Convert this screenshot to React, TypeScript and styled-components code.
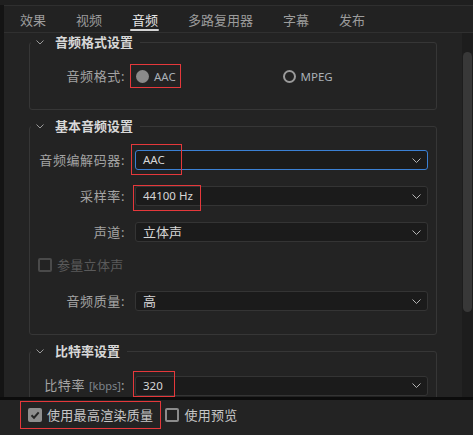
import React from 'react';
import styled, { createGlobalStyle } from 'styled-components';

const GlobalStyle = createGlobalStyle`
  html, body { margin: 0; padding: 0; background: #232323; }
  body { font-family: "Noto Sans", "Noto Sans CJK SC", sans-serif; }
  * { box-sizing: border-box; }
`;

const Root = styled.div`
  position: relative;
  width: 473px;
  height: 435px;
  display: flex;
  flex-direction: column;
  background: #232323;
  overflow: hidden;
  font-family: "Noto Sans", "Noto Sans CJK SC", sans-serif;
`;

const TopStrip = styled.div`
  flex: none;
  height: 5px;
  background: #1f1f1f;
`;

const Upper = styled.div`
  flex: none;
  height: 392px;
  display: flex;
`;

const LeftStrip = styled.div`
  flex: none;
  width: 4px;
  background: #141414;
`;

const Panel = styled.div`
  flex: 1;
  min-width: 0;
  display: flex;
  flex-direction: column;
  border-top: 1px solid #2f2f2f;
  background: #232323;
`;

const TabBar = styled.div`
  flex: none;
  height: 27px;
  display: flex;
  gap: 30px;
  padding-left: 16px;
  border-bottom: 1px solid #303030;
  background: #222222;
`;

const Tab = styled.div<{ $active?: boolean }>`
  position: relative;
  display: flex;
  align-items: center;
  font-size: 13px;
  color: ${p => (p.$active ? '#e6e6e6' : '#9c9c9c')};
  white-space: nowrap;
  &::after {
    content: '';
    display: ${p => (p.$active ? 'block' : 'none')};
    position: absolute;
    left: -2px;
    right: -1px;
    bottom: 1px;
    height: 2px;
    background: #d4d4d4;
    border-radius: 1px;
  }
`;

const Body = styled.div`
  flex: 1;
  min-height: 0;
  display: flex;
`;

const Content = styled.div`
  flex: 1;
  min-width: 0;
  overflow: hidden;
  padding-top: 1px;
`;

const ScrollTrack = styled.div`
  flex: none;
  width: 11px;
  background: #1d1d1d;
  padding: 19px 1px 0 1px;
`;

const ScrollThumb = styled.div`
  width: 9px;
  height: 260px;
  border-radius: 5px;
  background: #383838;
`;

const Group = styled.fieldset`
  margin: 0 25px 8px;
  padding: 16px 8px 23px 0;
  border: 1px solid #363636;
  border-radius: 3px;
  min-width: 0;
`;

const Legend = styled.legend`
  margin-left: 1px;
  padding: 0 7px 0 5px;
  height: 16px;
  display: flex;
  align-items: center;
  gap: 11px;
  font-size: 13px;
  line-height: 16px;
  font-weight: 700;
  color: #d8d8d8;
`;

const Rows = styled.div`
  display: flex;
  flex-direction: column;
  gap: 16px;
`;

const FormRow = styled.div`
  display: grid;
  grid-template-columns: 95px 1fr;
  column-gap: 10px;
  align-items: center;
  height: 20px;
`;

const Label = styled.div`
  text-align: right;
  font-size: 13px;
  line-height: 20px;
  letter-spacing: 0.6px;
  color: #a4a4a4;
  white-space: nowrap;
`;

const Unit = styled.span`
  font-size: 11px;
  letter-spacing: 0;
  color: #7f858c;
`;

const Select = styled.div<{ $focused?: boolean }>`
  height: 20px;
  display: flex;
  align-items: center;
  justify-content: space-between;
  padding: 0 6px 0 7px;
  background: #1b1b1b;
  border: 1px solid ${p => (p.$focused ? '#3b80d4' : '#343434')};
  border-radius: 3px;
`;

const Value = styled.span<{ $latin?: boolean }>`
  font-size: ${p => (p.$latin ? '11.5px' : '13px')};
  color: #d6d6d6;
  line-height: 18px;
`;

const RadioGroup = styled.div`
  display: grid;
  grid-template-columns: 1fr 1fr;
  align-items: center;
`;

const RadioItem = styled.div`
  display: flex;
  align-items: center;
  gap: 5px;
  padding-left: 1px;
`;

const RadioDot = styled.span<{ $checked?: boolean }>`
  width: 13px;
  height: 13px;
  border-radius: 50%;
  background: ${p => (p.$checked ? '#8a8a8a' : 'transparent')};
  border: ${p => (p.$checked ? 'none' : '2px solid #9a9a9a')};
`;

const RadioText = styled.span`
  font-size: 11.5px;
  color: #a9b0b6;
`;

const CheckRow = styled.div`
  display: flex;
  align-items: flex-start;
  gap: 5px;
  height: 17px;
  padding-left: 8px;
`;

const Box = styled.span<{ $checked?: boolean; $disabled?: boolean }>`
  flex: none;
  width: 14px;
  height: 14px;
  border-radius: 2px;
  display: flex;
  align-items: center;
  justify-content: center;
  background: ${p => (p.$checked ? '#8e8e8e' : 'transparent')};
  border: ${p => (p.$checked ? 'none' : `2px solid ${p.$disabled ? '#4a4a4a' : '#8c8c8c'}`)};
`;

const CheckText = styled.span<{ $disabled?: boolean }>`
  font-size: 13px;
  line-height: 14px;
  letter-spacing: 0.3px;
  color: ${p => (p.$disabled ? '#5a5a5a' : '#c6c6c6')};
  white-space: nowrap;
`;

const Separator = styled.div`
  flex: none;
  height: 3px;
  background: #0c0c0c;
`;

const Footer = styled.div`
  flex: 1;
  display: flex;
  align-items: flex-start;
  padding: 8px 0 0 28px;
  gap: 12px;
  background: #232323;
`;

const FooterItem = styled.div`
  display: flex;
  align-items: center;
  gap: 5px;
`;

const Highlight = styled.div`
  position: absolute;
  border: 1px solid #e5383b;
  pointer-events: none;
`;

const Chevron = ({ color = '#b4b4b4' }: { color?: string }) => (
  <svg width="9" height="5" viewBox="0 0 9 5" fill="none">
    <polyline points="0.5,0.5 4.5,4.5 8.5,0.5" stroke={color} strokeWidth="1" />
  </svg>
);

const LegendChevron = () => (
  <svg width="8" height="5" viewBox="0 0 8 5" fill="none">
    <polyline points="0.5,0.5 4,4 7.5,0.5" stroke="#9a9a9a" strokeWidth="1" />
  </svg>
);

const CheckMark = () => (
  <svg width="10" height="10" viewBox="0 0 10 10" fill="none">
    <polyline points="1.5,5.2 4,7.7 8.7,2.3" stroke="#262626" strokeWidth="2" />
  </svg>
);

const SelectRow = ({ label, value, latin, focused }: { label: React.ReactNode; value: string; latin?: boolean; focused?: boolean }) => (
  <FormRow>
    <Label>{label}</Label>
    <Select $focused={focused}>
      <Value $latin={latin}>{value}</Value>
      <Chevron />
    </Select>
  </FormRow>
);

const tabs = ['效果', '视频', '音频', '多路复用器', '字幕', '发布'];

export default function App() {
  return (
    <Root>
      <GlobalStyle />
      <TopStrip />
      <Upper>
        <LeftStrip />
        <Panel>
          <TabBar>
            {tabs.map(t => (
              <Tab key={t} $active={t === '音频'}>{t}</Tab>
            ))}
          </TabBar>
          <Body>
            <Content>
              <Group>
                <Legend><LegendChevron />音频格式设置</Legend>
                <FormRow>
                  <Label>音频格式:</Label>
                  <RadioGroup>
                    <RadioItem><RadioDot $checked /><RadioText>AAC</RadioText></RadioItem>
                    <RadioItem><RadioDot /><RadioText>MPEG</RadioText></RadioItem>
                  </RadioGroup>
                </FormRow>
              </Group>
              <Group>
                <Legend><LegendChevron />基本音频设置</Legend>
                <Rows>
                  <SelectRow label="音频编解码器:" value="AAC" latin focused />
                  <SelectRow label="采样率:" value="44100 Hz" latin />
                  <SelectRow label="声道:" value="立体声" />
                  <CheckRow>
                    <Box $disabled />
                    <CheckText $disabled>参量立体声</CheckText>
                  </CheckRow>
                  <SelectRow label="音频质量:" value="高" />
                </Rows>
              </Group>
              <Group>
                <Legend><LegendChevron />比特率设置</Legend>
                <Rows>
                  <SelectRow label={<>比特率 <Unit>[kbps]</Unit>:</>} value="320" latin />
                </Rows>
              </Group>
            </Content>
            <ScrollTrack>
              <ScrollThumb />
            </ScrollTrack>
          </Body>
        </Panel>
      </Upper>
      <Separator />
      <Footer>
        <FooterItem>
          <Box $checked><CheckMark /></Box>
          <CheckText>使用最高渲染质量</CheckText>
        </FooterItem>
        <FooterItem>
          <Box />
          <CheckText>使用预览</CheckText>
        </FooterItem>
      </Footer>
      <Highlight style={{ left: 130, top: 64, width: 51, height: 24 }} />
      <Highlight style={{ left: 131, top: 144, width: 51, height: 31 }} />
      <Highlight style={{ left: 133, top: 185, width: 68, height: 26 }} />
      <Highlight style={{ left: 133, top: 371, width: 42, height: 26 }} />
      <Highlight style={{ left: 20, top: 401, width: 141, height: 28 }} />
    </Root>
  );
}
